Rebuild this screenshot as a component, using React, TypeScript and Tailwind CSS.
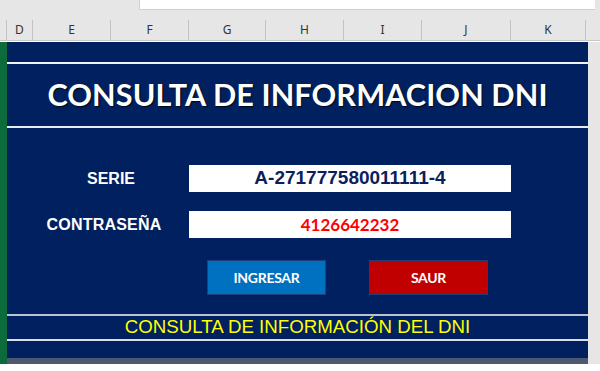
import React from "react";

const cols: { l: string; w: number }[] = [
  { l: "D", w: 26 },
  { l: "E", w: 78 },
  { l: "F", w: 78 },
  { l: "G", w: 77 },
  { l: "H", w: 78 },
  { l: "I", w: 78 },
  { l: "J", w: 89 },
  { l: "K", w: 75 },
];

export default function App() {
  return (
    <div className="w-[600px] h-[371px] bg-white flex flex-col overflow-hidden" style={{ fontFamily: "'Liberation Sans', Arial, sans-serif" }}>
      {/* top strip */}
      <div className="h-[20px] bg-[#e6e6e6] flex shrink-0">
        <div className="ml-[139px] w-[456px] h-[10px] bg-white border-l border-b border-[#d0d0d0]" />
      </div>
      {/* column headers */}
      <div className="h-[21px] bg-[#e6e6e6] flex shrink-0 border-b border-[#c8c8c8]">
        <div className="w-[7px] border-r border-[#c2c2c2]" />
        {cols.map((c) => (
          <div
            key={c.l}
            className="border-r border-[#c2c2c2] flex items-center justify-center text-[12px] text-[#333]"
            style={{ width: c.w, fontFamily: "'Noto Sans', sans-serif" }}
          >
            {c.l}
          </div>
        ))}
        <div className="flex-1" />
      </div>
      {/* main */}
      <div className="flex h-[323px] shrink-0 border-t border-white">
        <div className="w-[7px] bg-[#0b6b3a]" />
        <div className="w-[581px] flex flex-col">
          <div className="h-[20px] bg-[#002060]" />
          <div className="h-[2px] bg-[#f0f2f6]" />
          <div className="h-[62px] bg-[#002060] flex items-center justify-center">
            <span
              className="text-white font-bold text-[30.6px] tracking-[0.1px]"
              style={{ fontFamily: "Lato, 'Open Sans', sans-serif", textShadow: "1px 1px 1px #000814" }}
            >
              CONSULTA DE INFORMACION DNI
            </span>
          </div>
          <div className="h-[2px] bg-[#e8ebf2]" />
          <div className="h-[186px] bg-[#002060] flex flex-col pt-[37px]">
            <div className="flex items-center h-[27px]">
              <div className="w-[182px] pl-[26px] text-center text-white font-bold text-[16px]">SERIE</div>
              <div className="w-[322px] h-[27px] bg-white flex items-center justify-center text-[#0b1f5c] font-bold text-[19px]">
                A-271777580011111-4
              </div>
            </div>
            <div className="flex items-center h-[27px] mt-[19px]">
              <div className="w-[182px] pl-[12px] text-center text-white font-bold text-[16px] tracking-[0.2px]">CONTRASEÑA</div>
              <div
                className="w-[322px] h-[27px] bg-white flex items-center justify-center text-[#ff0000] font-bold text-[17px]"
                style={{ fontFamily: "Lato, 'Open Sans', sans-serif" }}
              >
                4126642232
              </div>
            </div>
            <div className="flex mt-[22px] pl-[200px] gap-[43px]">
              <div
                className="w-[119px] h-[35px] bg-[#0070c0] border border-[#1f3f7a] flex items-center justify-center text-white font-bold text-[14px] tracking-[-0.3px]"
                style={{ fontFamily: "Lato, 'Open Sans', sans-serif" }}
              >
                INGRESAR
              </div>
              <div
                className="w-[119px] h-[35px] bg-[#c00000] border border-[#1f3f7a] flex items-center justify-center text-white font-bold text-[14px] tracking-[-0.3px]"
                style={{ fontFamily: "Lato, 'Open Sans', sans-serif" }}
              >
                SAUR
              </div>
            </div>
          </div>
          <div className="h-[2px] bg-[#b9c2d4]" />
          <div className="h-[23px] bg-[#002060] flex items-center justify-center text-[#ffff00] text-[18.7px]">
            CONSULTA DE INFORMACIÓN DEL DNI
          </div>
          <div className="h-[2px] bg-[#d9dee8]" />
          <div className="h-[17px] bg-[#002060]" />
          <div className="h-[6px] bg-[#4b5a70]" />
        </div>
        <div className="flex-1 bg-[#e6e6e6]" />
      </div>
      <div className="flex-1 bg-white" />
    </div>
  );
}
